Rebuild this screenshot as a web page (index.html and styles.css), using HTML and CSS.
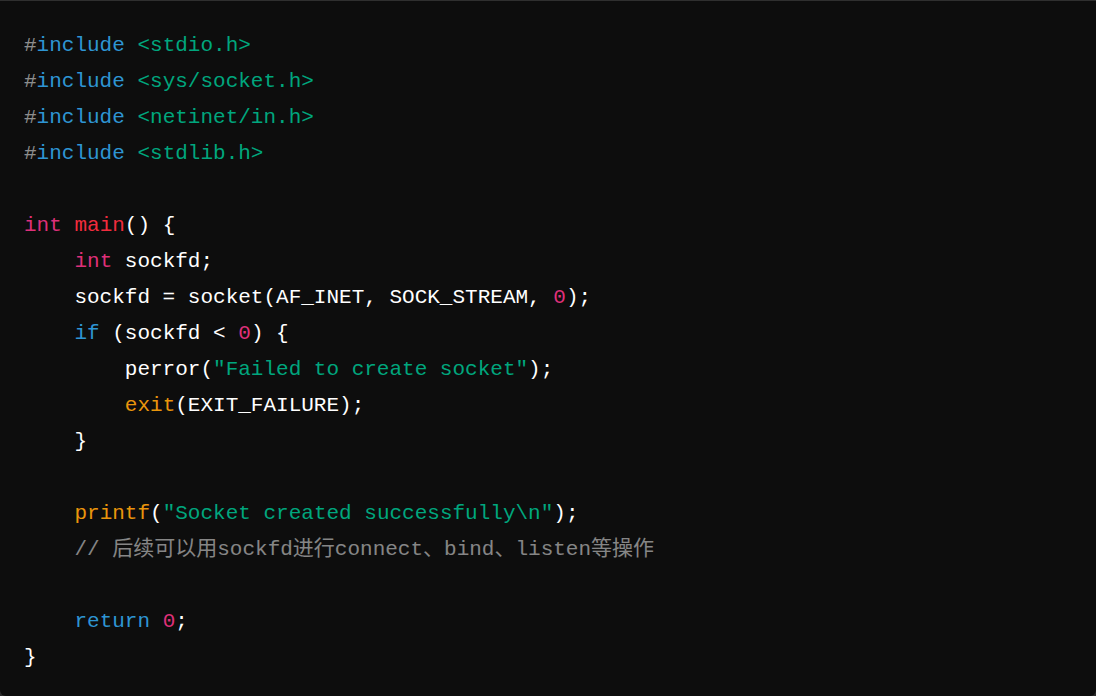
FILE: index.html
```html
<!DOCTYPE html>
<html lang="zh-CN">
<head>
<meta charset="utf-8">
<title>socket.c</title>
<link rel="stylesheet" href="styles.css">
</head>
<body>
<div class="code-block">
<pre class="code"><code><span class="meta"><span class="hash">#</span><span class="kw">include</span> <span class="str">&lt;stdio.h&gt;</span></span>
<span class="meta"><span class="hash">#</span><span class="kw">include</span> <span class="str">&lt;sys/socket.h&gt;</span></span>
<span class="meta"><span class="hash">#</span><span class="kw">include</span> <span class="str">&lt;netinet/in.h&gt;</span></span>
<span class="meta"><span class="hash">#</span><span class="kw">include</span> <span class="str">&lt;stdlib.h&gt;</span></span>

<span class="type">int</span> <span class="title">main</span>() {
    <span class="type">int</span> sockfd;
    sockfd = socket(AF_INET, SOCK_STREAM, <span class="num">0</span>);
    <span class="kw">if</span> (sockfd &lt; <span class="num">0</span>) {
        perror(<span class="str">"Failed to create socket"</span>);
        <span class="builtin">exit</span>(EXIT_FAILURE);
    }

    <span class="builtin">printf</span>(<span class="str">"Socket created successfully\n"</span>);
    <span class="comment">// 后续可以用sockfd进行connect、bind、listen等操作</span>

    <span class="kw">return</span> <span class="num">0</span>;
}</code></pre>
</div>
</body>
</html>
```
FILE: styles.css
```css
html, body {
  margin: 0;
  padding: 0;
  background: #2a2a2a;
  height: 100%;
}

.code-block {
  box-sizing: border-box;
  height: 696px;
  background: #0d0d0d;
  border-top: 1px solid #2f2f2f;
  border-radius: 0 0 6px 6px;
  overflow: hidden;
}

.code {
  margin: 0;
  padding: 27px 24px 0 24px;
  font-family: "Liberation Mono", "DejaVu Sans Mono", "Noto Sans CJK SC", monospace;
  font-size: 21px;
  line-height: 36px;
  color: #ffffff;
  white-space: pre;
}

.code code {
  font-family: inherit;
}

.hash { color: rgba(255, 255, 255, 0.55); }
.kw { color: #2e95d3; }
.str { color: #00a67d; }
.type { color: #df3079; }
.title { color: #f22c3d; }
.num { color: #df3079; }
.builtin { color: #e9950c; }
.comment { color: rgba(255, 255, 255, 0.5); }
```
